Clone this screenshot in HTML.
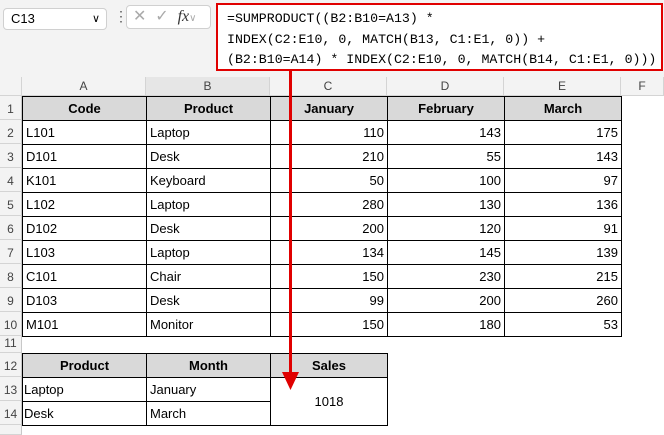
<!DOCTYPE html>
<html><head><meta charset="utf-8"><style>
*{margin:0;padding:0;box-sizing:border-box}
body{width:664px;height:432px;background:#fff;position:relative;overflow:hidden;font-family:"Liberation Sans",Arial,sans-serif;font-size:13px;color:#000}
.a{position:absolute}
.top{left:0;top:0;width:664px;height:77px;background:#f3f3f3}
.colh{top:77px;height:19px;background:#f3f3f3;border-right:1px solid #d4d4d4;border-bottom:1px solid #d4d4d4;color:#444;text-align:center;line-height:19px;font-size:12px}
.rowh{left:0;width:22px;background:#f3f3f3;border-bottom:1px solid #d4d4d4;border-right:1px solid #c8c8c8;color:#444;font-size:12px;text-align:center}
.h{background:#d9d9d9;font-weight:bold;text-align:center}
.r{text-align:right}
td{border:1px solid #000;height:24px;padding:0 3px;white-space:nowrap}
.f{font-family:"Liberation Mono",monospace;font-size:13.25px;line-height:20px;left:227px;white-space:pre}
</style></head><body>
<div class="a top"></div>
<div class="a" style="left:3px;top:8px;width:104px;height:22px;background:#fff;border:1px solid #d0d0d0;border-radius:4px;font-size:13px;line-height:20px;padding-left:7px">C13<span style="position:absolute;right:6px;top:0;font-size:11px">&#x2228;</span></div>
<div class="a" style="left:114px;top:8px;color:#555;font-size:14px">&#8942;</div>
<div class="a" style="left:126px;top:5px;width:85px;height:24px;background:#fff;border:1px solid #d0d0d0;border-radius:4px;color:#aaa;font-size:16px;line-height:22px;padding-left:6px">&#x2715;&nbsp;&nbsp;&#x2713;&nbsp; <i style="color:#333;font-family:'Liberation Serif',serif">fx</i><span style="font-size:10px">&#x2228;</span></div>
<div class="a" style="left:216px;top:3px;width:447px;height:68px;background:#fff;border:2px solid #e00000"></div>
<div class="a f" style="top:9px">=SUMPRODUCT((B2:B10=A13) *</div>
<div class="a f" style="top:30px">INDEX(C2:E10, 0, MATCH(B13, C1:E1, 0)) +</div>
<div class="a f" style="top:50px">(B2:B10=A14) * INDEX(C2:E10, 0, MATCH(B14, C1:E1, 0)))</div>

<div class="a colh" style="left:0;width:22px"></div>
<div class="a colh" style="left:22px;width:124px">A</div>
<div class="a colh" style="left:146px;width:124px;background:#e6e6e6">B</div>
<div class="a colh" style="left:270px;width:117px">C</div>
<div class="a colh" style="left:387px;width:117px">D</div>
<div class="a colh" style="left:504px;width:117px">E</div>
<div class="a colh" style="left:621px;width:43px">F</div>

<div class="a rowh" style="top:96px;height:24px;line-height:26px">1</div>
<div class="a rowh" style="top:120px;height:24px;line-height:26px">2</div>
<div class="a rowh" style="top:144px;height:24px;line-height:26px">3</div>
<div class="a rowh" style="top:168px;height:24px;line-height:26px">4</div>
<div class="a rowh" style="top:192px;height:24px;line-height:26px">5</div>
<div class="a rowh" style="top:216px;height:24px;line-height:26px">6</div>
<div class="a rowh" style="top:240px;height:24px;line-height:26px">7</div>
<div class="a rowh" style="top:264px;height:24px;line-height:26px">8</div>
<div class="a rowh" style="top:288px;height:24px;line-height:26px">9</div>
<div class="a rowh" style="top:312px;height:24px;line-height:26px">10</div>
<div class="a rowh" style="top:336px;height:17px;line-height:14px">11</div>
<div class="a rowh" style="top:353px;height:24px;line-height:26px">12</div>
<div class="a rowh" style="top:377px;height:24px;line-height:26px">13</div>
<div class="a rowh" style="top:401px;height:24px;line-height:26px">14</div>
<div class="a rowh" style="top:425px;height:10px"></div>

<div class="a" style="left:22px;top:96px">
<table style="border-collapse:collapse;table-layout:fixed">
<colgroup><col style="width:124px"><col style="width:124px"><col style="width:117px"><col style="width:117px"><col style="width:117px"></colgroup>
<tr><td class="h">Code</td><td class="h">Product</td><td class="h">January</td><td class="h">February</td><td class="h">March</td></tr>
<tr><td>L101</td><td>Laptop</td><td class="r">110</td><td class="r">143</td><td class="r">175</td></tr>
<tr><td>D101</td><td>Desk</td><td class="r">210</td><td class="r">55</td><td class="r">143</td></tr>
<tr><td>K101</td><td>Keyboard</td><td class="r">50</td><td class="r">100</td><td class="r">97</td></tr>
<tr><td>L102</td><td>Laptop</td><td class="r">280</td><td class="r">130</td><td class="r">136</td></tr>
<tr><td>D102</td><td>Desk</td><td class="r">200</td><td class="r">120</td><td class="r">91</td></tr>
<tr><td>L103</td><td>Laptop</td><td class="r">134</td><td class="r">145</td><td class="r">139</td></tr>
<tr><td>C101</td><td>Chair</td><td class="r">150</td><td class="r">230</td><td class="r">215</td></tr>
<tr><td>D103</td><td>Desk</td><td class="r">99</td><td class="r">200</td><td class="r">260</td></tr>
<tr><td>M101</td><td>Monitor</td><td class="r">150</td><td class="r">180</td><td class="r">53</td></tr>
</table></div>

<div class="a" style="left:22px;top:353px">
<table style="border-collapse:collapse;table-layout:fixed">
<colgroup><col style="width:124px"><col style="width:124px"><col style="width:117px"></colgroup>
<tr><td class="h">Product</td><td class="h">Month</td><td class="h">Sales</td></tr>
<tr><td style="padding-left:1px">Laptop</td><td>January</td><td rowspan="2" style="text-align:center">1018</td></tr>
<tr><td style="padding-left:1px">Desk</td><td>March</td></tr>
</table></div>

<div class="a" style="left:289px;top:71px;width:3px;height:305px;background:#e00000"></div>
<svg class="a" style="left:282px;top:372px" width="17" height="20"><polygon points="0,0 17,0 8.5,18" fill="#e00000"/></svg>
</body></html>
